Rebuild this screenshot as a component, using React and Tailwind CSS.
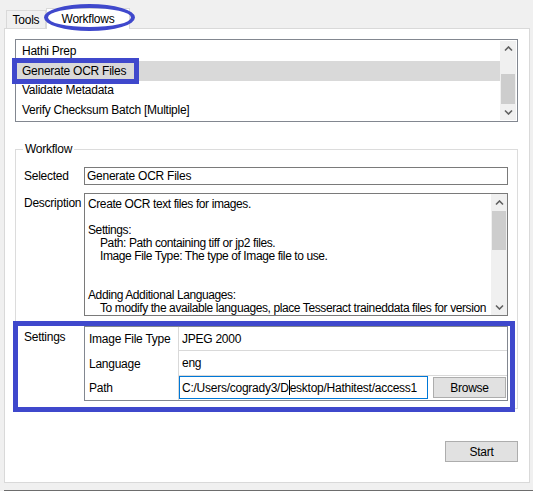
import React from "react";

const font = { fontFamily: '"Liberation Sans", Arial, sans-serif' };

const Chevron = ({ down }) => (
  <svg width="9" height="6" viewBox="0 0 9 6">
    <path
      d={down ? "M1 1.5 L4.5 5 L8 1.5" : "M1 4.5 L4.5 1 L8 4.5"}
      fill="none"
      stroke="#606060"
      strokeWidth="1.6"
    />
  </svg>
);

const ScrollBar = ({ thumbTop, thumbHeight }) => (
  <div className="w-[16px] h-full bg-[#f0f0f0] flex flex-col">
    <div className="h-[17px] flex items-center justify-center">
      <Chevron />
    </div>
    <div className="flex-1 flex flex-col">
      <div style={{ height: thumbTop }} />
      <div className="bg-[#cdcdcd] mx-px" style={{ height: thumbHeight }} />
    </div>
    <div className="h-[17px] flex items-center justify-center">
      <Chevron down />
    </div>
  </div>
);

const workflows = [
  "Hathi Prep",
  "Generate OCR Files",
  "Validate Metadata",
  "Verify Checksum Batch [Multiple]",
];

const descLines = [
  "Create OCR text files for images.",
  "",
  "Settings:",
  "   Path: Path containing tiff or jp2 files.",
  "   Image File Type: The type of Image file to use.",
  "",
  "",
  "Adding Additional Languages:",
  "   To modify the available languages, place Tesseract traineddata files for version",
  "3.05.00 into the following directory:",
];

export default function App() {
  return (
    <div
      className="relative w-[533px] h-[491px] bg-[#f0f0f0] overflow-hidden text-[12px] tracking-[-0.25px] text-black"
      style={font}
    >
      {/* tabs */}
      <div className="h-[28px] flex items-end pl-[6px]">
        <div className="h-[18px] w-[40px] border border-b-0 border-[#d9d9d9] bg-[#f0f0f0] flex items-center justify-center leading-none pt-px">
          Tools
        </div>
        <div className="relative z-10 -mb-px h-[21px] w-[84px] border border-b-0 border-[#d9d9d9] bg-white flex items-center justify-center leading-none">
          Workflows
        </div>
      </div>

      {/* tab page */}
      <div className="ml-[4px] w-[526px] h-[455px] border border-[#d9d9d9] bg-white pl-[10px] pt-[10px] flex flex-col">
        {/* workflow list */}
        <div className="w-[503px] h-[83px] border border-[#828790] p-px flex">
          <div className="flex-1 flex flex-col">
            {workflows.map((w, i) => (
              <div
                key={w}
                className={`h-[20px] pl-[5px] flex items-center whitespace-nowrap ${
                  i === 1 ? "bg-[#d9d9d9]" : ""
                }`}
              >
                {w}
              </div>
            ))}
          </div>
          <ScrollBar thumbTop={16} thumbHeight={30} />
        </div>

        {/* Workflow group */}
        <div className="relative mt-[27px] w-[503px] h-[260px] border border-[#dcdcdc] pl-[8px] pt-[17px] flex flex-col">
          <span className="absolute -top-[8px] left-[7px] bg-white px-[2px] leading-[14px]">
            Workflow
          </span>

          <div className="flex items-center">
            <div className="w-[60px]">Selected</div>
            <div className="w-[424px] h-[18px] border border-[#7a7a7a] pl-[2px] flex items-center whitespace-nowrap">
              Generate OCR Files
            </div>
          </div>

          <div className="flex mt-[8px]">
            <div className="w-[60px] pt-[4px] leading-[13px]">Description</div>
            <div className="w-[424px] h-[123px] border border-[#7a7a7a] flex overflow-hidden">
              <div className="flex-1 pl-[3px] pt-[4px] overflow-hidden tracking-[-0.4px]">
                {descLines.map((l, i) => (
                  <div
                    key={i}
                    className={`h-[13px] leading-[13px] whitespace-nowrap ${
                      l.startsWith("   ") ? "pl-[12px]" : ""
                    }`}
                  >
                    {l.trim()}
                  </div>
                ))}
              </div>
              <ScrollBar thumbTop={0} thumbHeight={39} />
            </div>
          </div>

          <div className="flex mt-[10px]">
            <div className="w-[60px] pt-[5px] leading-[13px]">Settings</div>
            <div className="w-[424px] h-[75px] border border-[#828790] flex flex-col">
              <div className="flex h-[24px]">
                <div className="w-[93px] pl-[4px] flex items-center">Image File Type</div>
                <div className="flex-1 border-l border-b border-[#d9d9d9] pl-[3px] flex items-center">
                  JPEG 2000
                </div>
              </div>
              <div className="flex h-[25px]">
                <div className="w-[93px] pl-[4px] flex items-center">Language</div>
                <div className="flex-1 border-l border-b border-[#d9d9d9] pl-[3px] flex items-center">
                  eng
                </div>
              </div>
              <div className="flex h-[24px]">
                <div className="w-[93px] pl-[4px] flex items-center">Path</div>
                <div className="flex-1 border-l border-[#d9d9d9] flex items-start">
                  <div className="w-[249px] h-[23px] border border-[#0078d7] pl-[2px] flex items-center whitespace-nowrap overflow-hidden">
                    C:/Users/cogrady3/D
                    <span className="inline-block w-px h-[15px] bg-black" />
                    esktop/Hathitest/access1
                  </div>
                  <button className="ml-[5px] mt-px w-[73px] h-[21px] border border-[#adadad] bg-[#e1e1e1] flex items-center justify-center">
                    Browse
                  </button>
                </div>
              </div>
            </div>
          </div>
        </div>

        <div className="w-[503px] mt-[32px] flex justify-end">
          <button className="w-[73px] h-[21px] border border-[#adadad] bg-[#e1e1e1] flex items-center justify-center">
            Start
          </button>
        </div>
      </div>

      <div className="mt-[7px] ml-[4px] h-px bg-[#6d6d6d]" />

      {/* annotation marks */}
      <div className="absolute z-20 left-[44px] top-[4px] w-[91px] h-[27px] rounded-[50%] border-[4px] border-[#3f48cc]" />
      <div className="absolute z-20 left-[12px] top-[58px] w-[127px] h-[26px] border-[5px] border-[#3f48cc]" />
      <div className="absolute z-20 left-[13px] top-[321px] w-[502px] h-[91px] border-[5px] border-[#3f48cc]" />
    </div>
  );
}
